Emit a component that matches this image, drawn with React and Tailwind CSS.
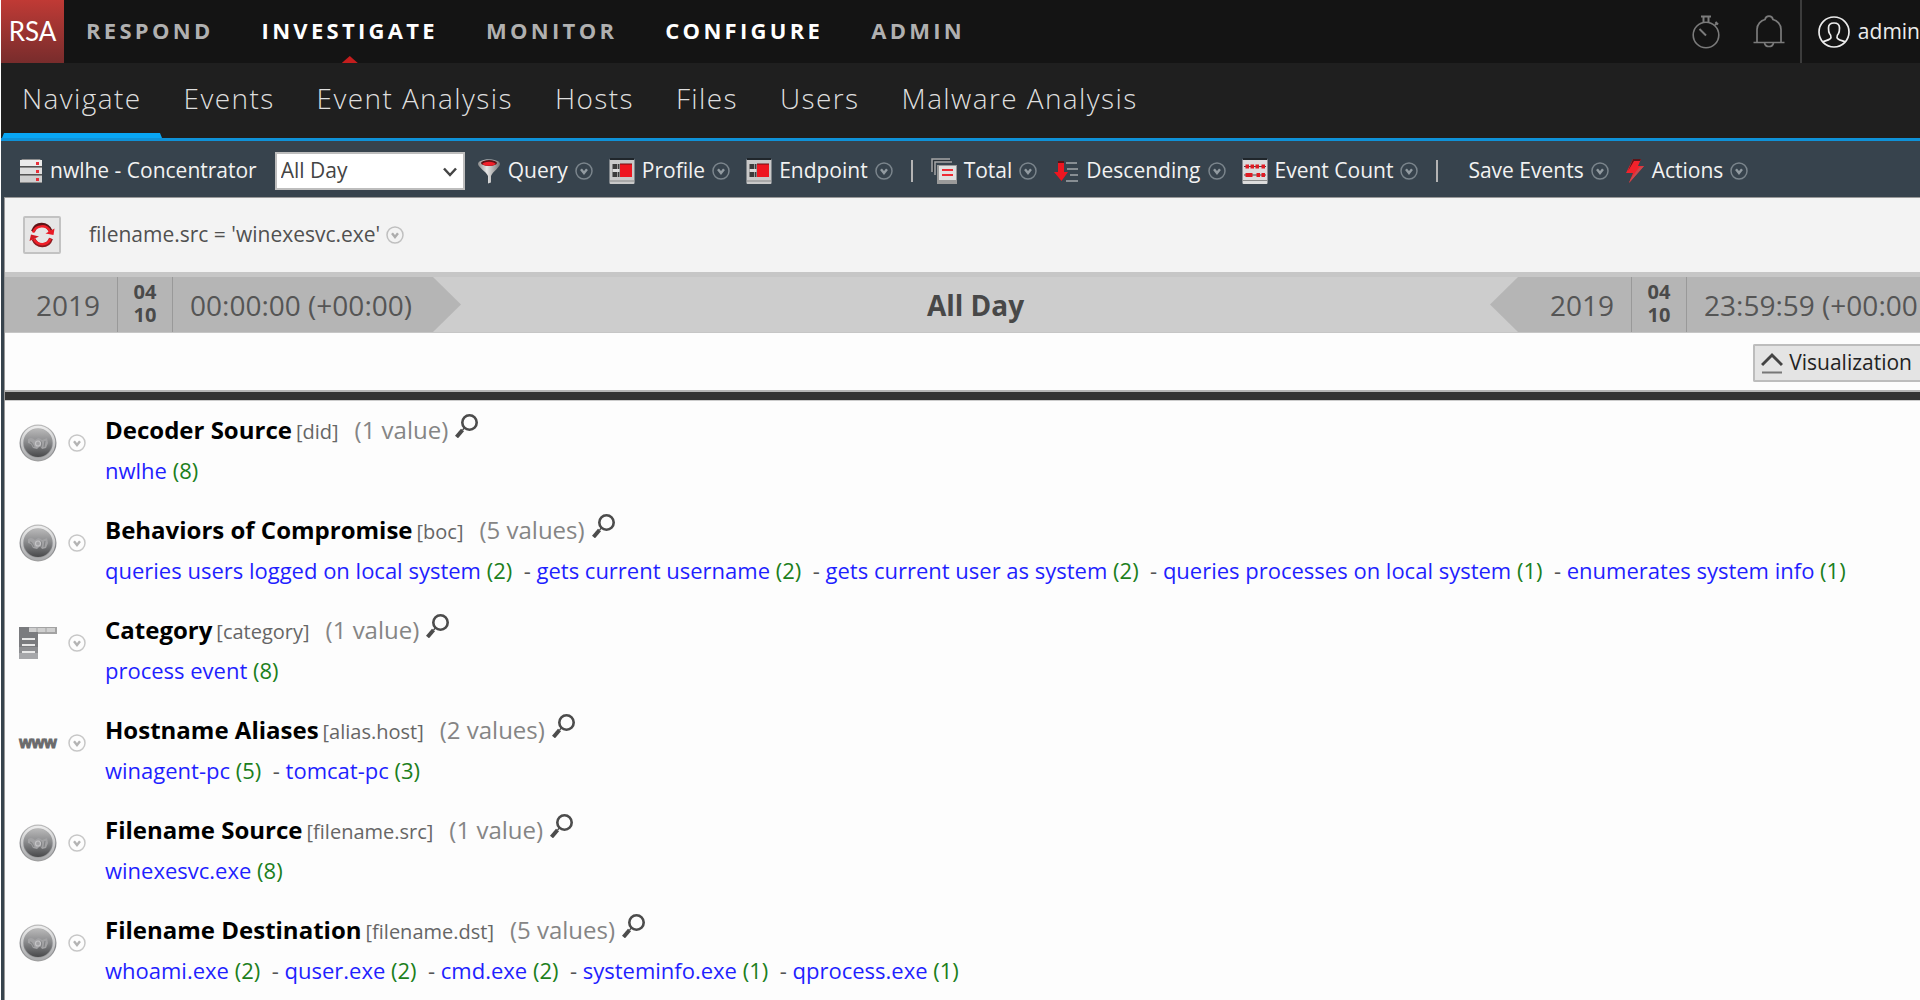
import React from "react";

const topNav = [
  { label: "RESPOND" },
  { label: "INVESTIGATE", bright: true, current: true },
  { label: "MONITOR" },
  { label: "CONFIGURE", bright: true },
  { label: "ADMIN" },
];

const subNav = ["Navigate", "Events", "Event Analysis", "Hosts", "Files", "Users", "Malware Analysis"];

const metaKeys = [
  { icon: "globe", title: "Decoder Source", key: "did", count: "1 value", values: [["nwlhe", 8]] },
  {
    icon: "globe",
    title: "Behaviors of Compromise",
    key: "boc",
    count: "5 values",
    values: [
      ["queries users logged on local system", 2],
      ["gets current username", 2],
      ["gets current user as system", 2],
      ["queries processes on local system", 1],
      ["enumerates system info", 1],
    ],
  },
  { icon: "category", title: "Category", key: "category", count: "1 value", values: [["process event", 8]] },
  {
    icon: "www",
    title: "Hostname Aliases",
    key: "alias.host",
    count: "2 values",
    values: [["winagent-pc", 5], ["tomcat-pc", 3]],
  },
  { icon: "globe", title: "Filename Source", key: "filename.src", count: "1 value", values: [["winexesvc.exe", 8]] },
  {
    icon: "globe",
    title: "Filename Destination",
    key: "filename.dst",
    count: "5 values",
    values: [
      ["whoami.exe", 2],
      ["quser.exe", 2],
      ["cmd.exe", 2],
      ["systeminfo.exe", 1],
      ["qprocess.exe", 1],
    ],
  },
];

function CircleChevron({ className }) {
  return (
    <svg viewBox="0 0 18 18" className={`size-[18px] shrink-0 ${className}`} fill="none" stroke="currentColor" aria-hidden="true">
      <circle cx="9" cy="9" r="8" strokeWidth="1.5" opacity="0.75" />
      <path d="M6 7.2 9 11l3-3.8" strokeWidth="2.4" />
    </svg>
  );
}

function ServerIcon() {
  return (
    <svg viewBox="0 0 24 26" className="h-[26px] w-6 shrink-0" aria-hidden="true">
      <path d="M3 1h18l2 3v21H1V4z" fill="#8d8d8d" />
      <rect x="1" y="2" width="22" height="6" fill="#ececec" />
      <rect x="1" y="10" width="22" height="6" fill="#dedede" />
      <rect x="1" y="18" width="22" height="6" fill="#cfcfcf" />
      <rect x="1" y="8" width="22" height="1" fill="#555" />
      <rect x="1" y="16" width="22" height="1" fill="#555" />
      <rect x="17" y="4" width="3" height="3" fill="#e8303a" />
      <rect x="17" y="12" width="3" height="3" fill="#e8303a" />
      <rect x="17" y="20" width="3" height="3" fill="#e8303a" />
    </svg>
  );
}

function FunnelIcon() {
  return (
    <svg viewBox="0 0 24 26" className="h-[26px] w-6 shrink-0" aria-hidden="true">
      <defs>
        <linearGradient id="funnel" x1="0" x2="1" y1="0" y2="0">
          <stop offset="0" stopColor="#8b8b8b" />
          <stop offset="0.4" stopColor="#e6e6e6" />
          <stop offset="1" stopColor="#777" />
        </linearGradient>
      </defs>
      <path d="M1 6c0-3 5-4.500 11-4.500S23 3 23 6c0 3-7.500 8-9 12v6.500l-3 1V18C9.500 14 1 9 1 6z" fill="url(#funnel)" />
      <ellipse cx="12" cy="5" rx="8" ry="3" fill="#5b1115" />
      <ellipse cx="12" cy="5.800" rx="6.500" ry="2" fill="#f0202a" />
    </svg>
  );
}

function PanelIcon() {
  return (
    <svg viewBox="0 0 26 26" className="size-[26px] shrink-0" aria-hidden="true">
      <rect x="0.500" y="1" width="25" height="25" rx="1" fill="#c9c9c9" />
      <rect x="1" y="0" width="24" height="2" fill="#20262b" />
      <rect x="0.500" y="22.500" width="25" height="1" fill="#8a8a8a" />
      <rect x="3.500" y="6" width="7" height="13" fill="#3b3b3b" />
      <rect x="8" y="6" width="1" height="13" fill="#999" />
      <rect x="3.500" y="11" width="7" height="3" fill="#dadada" />
      <rect x="11" y="6" width="12" height="13" fill="#ee1620" />
      <path d="M11 6h12" stroke="#6f1115" strokeWidth="1" />
    </svg>
  );
}

function StackIcon() {
  return (
    <svg viewBox="0 0 26 26" className="size-[26px] shrink-0" aria-hidden="true">
      <path d="M1 14V1h18M4 17V4h17" fill="none" stroke="#a5a5a5" strokeWidth="1.500" />
      <path d="M2.500 14V2.500h17" fill="none" stroke="#2b3238" strokeWidth="1" />
      <rect x="6" y="7" width="20" height="19" fill="#9a9a9a" />
      <rect x="8" y="8" width="17" height="14" fill="#e0e0e0" />
      <path d="M11 12h11M11 17h11" stroke="#ee2a33" strokeWidth="2" />
    </svg>
  );
}

function DescendingIcon() {
  return (
    <svg viewBox="0 0 26 26" className="size-[26px] shrink-0" aria-hidden="true">
      <path d="M5 4h6v10h4l-6.500 9L1 14h4z" fill="#ee1620" />
      <path d="M5 4h6" stroke="#5b1115" strokeWidth="2" />
      <path d="M13 5h11M14 11h11M17 17h8M13 23h12" stroke="#a3a8ab" strokeWidth="1.500" />
    </svg>
  );
}

function AbacusIcon() {
  return (
    <svg viewBox="0 0 26 26" className="size-[26px] shrink-0" aria-hidden="true">
      <rect x="0.500" y="1" width="25" height="25" rx="1" fill="#dcdcdc" />
      <rect x="1" y="0" width="24" height="2" fill="#20262b" />
      <rect x="0.500" y="22" width="25" height="1" fill="#8a8a8a" />
      <path d="M2 8.500h22M2 17h22" stroke="#444" strokeWidth="1" />
      <path d="M3.500 8.500h3.500M8.500 8.500h3.500M13.500 8.500h3.500M19.500 8.500h3.500" stroke="#e01a22" strokeWidth="4" />
      <path d="M3.500 17h7M14.500 17h3.500M19.500 17h3.500" stroke="#e01a22" strokeWidth="4" />
    </svg>
  );
}

function BoltIcon() {
  return (
    <svg viewBox="0 0 20 26" className="h-[26px] w-5 shrink-0" aria-hidden="true">
      <path d="M8 1h8l-3 7h6L4 25l4-10H1z" fill="#f2222b" />
      <path d="M8 1h8l-1 2H9L3 13z" fill="#5b1519" />
      <path d="M19 8 4 25l1.500-4L14.500 9z" fill="#c9484e" />
    </svg>
  );
}

function StopwatchIcon() {
  return (
    <svg viewBox="0 0 28 34" className="h-[34px] w-7" fill="none" stroke="#7b7b7b" strokeWidth="1.600" aria-hidden="true">
      <circle cx="14" cy="20" r="12.800" />
      <path d="M9 1.500h10M11.500 1.500v5.500M16.500 1.500v5.500" strokeWidth="2" />
      <path d="M23 10l2-2M23.500 7l2.500 2.500" strokeWidth="2" />
      <path d="M7.500 14 14 20.500" strokeWidth="2" />
    </svg>
  );
}

function BellIcon() {
  return (
    <svg viewBox="0 0 34 34" className="size-[34px]" fill="none" stroke="#7b7b7b" strokeWidth="1.700" aria-hidden="true">
      <path d="M1.500 27.500h31M5 27V14.500C5 9 9 5.500 13 4.500 13.500 2 15 1.200 17 1.200S20.500 2 21 4.500c4 1 8 4.500 8 10V27" />
      <path d="M12.500 28c.5 2.500 2.500 3.500 4.500 3.500s4-1 4.500-3.500" />
    </svg>
  );
}

function UserIcon() {
  return (
    <svg viewBox="0 0 32 32" className="size-8" fill="none" stroke="#ececec" strokeWidth="1.700" aria-hidden="true">
      <circle cx="16" cy="16" r="15" />
      <path d="M4.500 26c3-1.700 8-1.700 8.500-4.500.3-1.500-.2-2.500-1.500-4-1-1.500-1-3.500-1-5.500C10.500 8.500 12 7 16 7s5.500 1.500 5.500 5c0 2 0 4-1 5.500-1.300 1.500-1.800 2.500-1.500 4 .5 2.800 5.500 2.800 8.500 4.500" />
    </svg>
  );
}

function RefreshIcon() {
  return (
    <svg viewBox="0 0 26 26" className="size-[26px]" fill="none" aria-hidden="true">
      <path d="M4 9.500C7 .5 18 .5 21.500 9" stroke="#5e1417" strokeWidth="4" />
      <path d="M4 10.500C7 2.500 18 2.500 21 9.500" stroke="#f01e28" strokeWidth="2.500" />
      <path d="M25.500 6.500 24.500 13l-8-1.500z" fill="#e81b25" />
      <path d="M22 16.500C19 25.500 8 25.500 4.500 17" stroke="#8d1a1f" strokeWidth="4" />
      <path d="M21.500 16.500C18.500 24 8.500 24 5 17" stroke="#f01e28" strokeWidth="2.500" />
      <path d="M.5 19 2 12.500l8 2z" fill="#d21923" />
    </svg>
  );
}

function MagnifierIcon() {
  return (
    <svg viewBox="0 0 24 24" className="size-6" fill="none" stroke="#4c4c4c" aria-hidden="true">
      <circle cx="14.500" cy="8.500" r="7.200" strokeWidth="2.600" />
      <path d="M9.500 14 7.500 16" strokeWidth="1.500" />
      <path d="M7.500 16 1.500 23" strokeWidth="4" />
    </svg>
  );
}

function GlobeIcon() {
  return (
    <svg viewBox="0 0 38 38" className="size-[38px]" aria-hidden="true">
      <defs>
        <linearGradient id="rim" x1="0" x2="0" y1="0" y2="1">
          <stop offset="0" stopColor="#bdbdbd" />
          <stop offset="0.600" stopColor="#85868a" />
          <stop offset="1" stopColor="#a0a0a0" />
        </linearGradient>
        <linearGradient id="ring" x1="0" x2="0" y1="0" y2="1">
          <stop offset="0" stopColor="#ececec" />
          <stop offset="1" stopColor="#aaabad" />
        </linearGradient>
        <linearGradient id="disc" x1="0" x2="0" y1="0" y2="1">
          <stop offset="0" stopColor="#b8b8b8" />
          <stop offset="0.450" stopColor="#8b8c8e" />
          <stop offset="1" stopColor="#48494b" />
        </linearGradient>
      </defs>
      <circle cx="19" cy="19" r="18.500" fill="url(#rim)" />
      <circle cx="19" cy="19" r="16" fill="none" stroke="url(#ring)" strokeWidth="2.500" />
      <circle cx="19" cy="19" r="14" fill="url(#disc)" />
      <path d="M9 15c3-2 5-1 7 1l3-2c2 0 3 1 4 2l5-2 1 5-2 5-4 1-2-3-3 3-4-1-2-4-3-1z" fill="#a2a2a4" />
      <path d="M11 18c2 0 3 3 4 5M21 17c2 1 2 3 1 6M26 17l-1 6" fill="none" stroke="#838486" strokeWidth="1.200" />
      <circle cx="19" cy="19.500" r="2.500" fill="none" stroke="#c4c4c6" strokeWidth="1.200" />
    </svg>
  );
}

function CategoryIcon() {
  return (
    <svg viewBox="0 0 38 32" className="h-8 w-[38px]" aria-hidden="true">
      <rect width="38" height="7" fill="#a3a3a3" />
      <rect x="0" width="19" height="32" fill="#a6a7aa" />
      <path d="M0 0h10v5h9v15H0z" fill="#7a7b7e" />
      <rect y="20" width="19" height="6" fill="#8d8e91" />
      <rect x="10" y="1" width="26" height="4" fill="#cfcfcf" />
      <path d="M18 1v4M27 1v4" stroke="#a3a3a3" />
      <path d="M3 12h13M3 18h13M3 25h13" stroke="#e8e8e8" strokeWidth="2" />
    </svg>
  );
}

function RowIcon({ type }) {
  if (type === "category") return <CategoryIcon />;
  if (type === "www")
    return (
      <span
        className="font-['Liberation_Sans',sans-serif] text-[16px] leading-8 font-bold text-[#6a6a6c] [-webkit-text-stroke:1px_#6a6a6c]"
        aria-hidden="true"
      >
        www
      </span>
    );
  return <GlobeIcon />;
}

function MenuButton({ icon, children }) {
  return (
    <button type="button" className="flex items-center gap-[7px]">
      {icon}
      <span>{children}</span>
      <CircleChevron className="text-[#929ba1]" />
    </button>
  );
}

function Separator() {
  return <span className="mx-0.5 h-[22px] w-0.5 shrink-0 bg-[#b4b4b4]" />;
}

function DateParts({ time }) {
  return (
    <>
      <span className="px-[17px]">2019</span>
      <span className="flex h-full w-14 shrink-0 flex-col items-center justify-center border-x border-[#999] pb-[3px] text-[20px] leading-[23px] font-bold text-[#4a4a4a]">
        <span>04</span>
        <span>10</span>
      </span>
      <span className="pl-[17px]">{time}</span>
    </>
  );
}

function MetaRow({ item }) {
  return (
    <section className="flex pb-7">
      <div className="mt-[10px] flex h-[38px] w-[100px] shrink-0 items-center pl-[14px]">
        <span className="flex w-[38px] justify-center">
          <RowIcon type={item.icon} />
        </span>
        <button type="button" aria-label={`${item.title} options`} className="ml-[11px]">
          <CircleChevron className="text-[#b4b4b4]" />
        </button>
      </div>
      <div className="min-w-0">
        <div className="flex h-8 items-baseline leading-8 whitespace-nowrap">
          <h2 className="text-[24px] font-bold text-black">{item.title}</h2>
          <span className="ml-1 text-[20px] text-[#666]">[{item.key}]</span>
          <span className="ml-4 text-[24px] text-[#858585]">({item.count})</span>
          <button type="button" aria-label={`Search ${item.title}`} className="ml-[7px] self-start">
            <MagnifierIcon />
          </button>
        </div>
        <p className="mt-2 text-[22px] leading-8 text-[#555]">
          {item.values.map(([name, n], i) => (
            <React.Fragment key={name}>
              {i > 0 && "\u00a0 - "}
              <a href="#" className="text-[#1f1fff]">{name}</a> <span className="text-[#1c7f1c]">({n})</span>
            </React.Fragment>
          ))}
        </p>
      </div>
    </section>
  );
}

export default function App() {
  return (
    <div className="min-h-screen overflow-hidden bg-white pl-px font-['Open_Sans',sans-serif]">
      <header className="flex h-[63px] bg-[#141414]">
        <a href="#" className="flex w-[63px] shrink-0 items-center justify-center bg-linear-to-b from-[#c03a35] to-[#782c2c] font-['Lato',sans-serif] text-[26px] text-white">
          RSA
        </a>
        <nav className="ml-[22px] flex gap-12 text-[22px] font-bold tracking-[0.15em]">
          {topNav.map((n) => (
            <a key={n.label} href="#" className={`relative flex items-center pb-0.5 ${n.bright ? "text-white" : "text-[#b0b0b0]"}`}>
              {n.label}
              {n.current && (
                <span className="absolute bottom-0 left-1/2 h-[7px] w-4 -translate-x-1/2 bg-[#c41d1d] [clip-path:polygon(50%_0,100%_100%,0_100%)]" />
              )}
            </a>
          ))}
        </nav>
        <div className="ml-auto flex items-center">
          <button type="button" aria-label="Jobs" className="mr-8">
            <StopwatchIcon />
          </button>
          <button type="button" aria-label="Notifications" className="mr-[14px]">
            <BellIcon />
          </button>
          <button type="button" className="flex h-full items-center gap-2 border-l-2 border-[#3c3c3c] pl-4 text-[21px] text-[#ececec]">
            <UserIcon />
            admin
          </button>
        </div>
      </header>

      <nav className="flex h-[78px] gap-[42px] border-b-3 border-[#0f92d8] bg-[#1f1f1f] pl-px text-[28px] font-light tracking-wider text-[#dedede]">
        {subNav.map((label, i) => (
          <a key={label} href="#" className={`relative flex items-center pb-1.5 ${i === 0 ? "pl-5" : ""}`}>
            {label}
            {i === 0 && (
              <span className="absolute bottom-0 left-0 h-[5px] w-40 bg-[#08a6f5] [clip-path:polygon(2px_0,158px_0,100%_100%,0_100%)]" />
            )}
          </a>
        ))}
      </nav>

      <div className="flex h-14 items-center gap-4 bg-[#37434d] pt-[3px] pl-[18px] text-[21px] whitespace-nowrap text-[#f2f2f2]">
        <button type="button" className="flex items-center gap-[7px]">
          <ServerIcon />
          nwlhe - Concentrator
        </button>
        <div className="relative ml-0.5 shrink-0">
          <select aria-label="Time range" className="h-[38px] w-[190px] appearance-none border-2 border-[#bdbdbd] bg-white pl-1 text-[21px] text-[#444]">
            <option>All Day</option>
          </select>
          <svg viewBox="0 0 14 10" className="pointer-events-none absolute top-[15px] right-2 h-[10px] w-[14px]" fill="none" stroke="#444" strokeWidth="2.500" aria-hidden="true">
            <path d="M1 1.500 7 8l6-6.500" />
          </svg>
        </div>
        <div className="-ml-1 flex items-center gap-4">
          <MenuButton icon={<FunnelIcon />}>Query</MenuButton>
          <MenuButton icon={<PanelIcon />}>Profile</MenuButton>
          <MenuButton icon={<PanelIcon />}>Endpoint</MenuButton>
          <Separator />
          <MenuButton icon={<StackIcon />}>Total</MenuButton>
          <MenuButton icon={<DescendingIcon />}>Descending</MenuButton>
          <MenuButton icon={<AbacusIcon />}>Event Count</MenuButton>
          <Separator />
          <span className="ml-3">
            <MenuButton>Save Events</MenuButton>
          </span>
          <MenuButton icon={<BoltIcon />}>Actions</MenuButton>
        </div>
      </div>

      <div className="bg-[#37434d] pl-[3px]">
        <div className="min-h-[calc(100vh-197px)] border-l border-[#999] bg-[#fdfdfd]">
          <div className="flex h-[75px] items-center border-t border-[#999] bg-[#f3f3f3] pl-[18px] text-[21px] text-[#505050]">
            <button type="button" aria-label="Refresh" className="flex size-[38px] items-center justify-center rounded-[2px] border-2 border-[#c2c2c2] bg-[#e6e6e6]">
              <RefreshIcon />
            </button>
            <button type="button" className="ml-7 flex items-center gap-1.5">
              filename.src = 'winexesvc.exe'
              <CircleChevron className="text-[#adadad]" />
            </button>
          </div>

          <div className="flex h-[61px] overflow-hidden border-t-5 border-b border-[#c6c6c6] bg-[#cdcdcd] text-[28px] whitespace-nowrap text-[#555]">
            <div className="flex w-[456px] shrink-0 items-center bg-[#b5b5b5] pl-[14px] [clip-path:polygon(0_0,428px_0,100%_50%,428px_100%,0_100%)]">
              <DateParts time="00:00:00 (+00:00)" />
            </div>
            <div className="flex min-w-0 flex-1 items-center justify-center font-bold text-[#484848]">All Day</div>
            <div className="flex w-[430px] shrink-0 items-center overflow-hidden bg-[#b5b5b5] pl-[43px] [clip-path:polygon(0_50%,28px_0,100%_0,100%_100%,28px_100%)]">
              <DateParts time="23:59:59 (+00:00" />
            </div>
          </div>

          <div className="flex h-[59px] items-start justify-end border-b-2 border-[#b5b5b5] pt-[11px]">
            <button type="button" className="flex h-[38px] items-center gap-1.5 rounded-l-[2px] border-2 border-r-0 border-[#bdbdbd] bg-[#e4e4e4] pr-2 pl-1.5 text-[21px] text-[#222]">
              <svg viewBox="0 0 22 22" className="size-[22px]" fill="none" stroke="#444" aria-hidden="true">
                <path d="M1 13 11 3l10 10" strokeWidth="3" />
                <path d="M1 20.500h20" strokeWidth="2" stroke="#777" />
              </svg>
              Visualization
            </button>
          </div>

          <div className="h-[9px] border-b border-[#ccc] bg-[#333]" />

          <main className="pt-[13px]">
            {metaKeys.map((item) => (
              <MetaRow key={item.key} item={item} />
            ))}
          </main>
        </div>
      </div>
    </div>
  );
}
